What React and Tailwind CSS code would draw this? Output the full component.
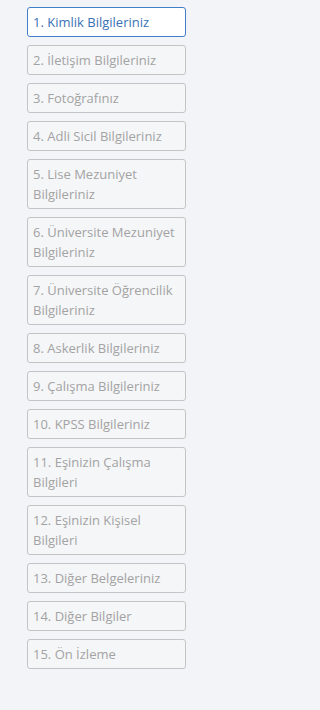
import React from 'react';

const steps = [
  '1. Kimlik Bilgileriniz',
  '2. İletişim Bilgileriniz',
  '3. Fotoğrafınız',
  '4. Adli Sicil Bilgileriniz',
  '5. Lise Mezuniyet Bilgileriniz',
  '6. Üniversite Mezuniyet Bilgileriniz',
  '7. Üniversite Öğrencilik Bilgileriniz',
  '8. Askerlik Bilgileriniz',
  '9. Çalışma Bilgileriniz',
  '10. KPSS Bilgileriniz',
  '11. Eşinizin Çalışma Bilgileri',
  '12. Eşinizin Kişisel Bilgileri',
  '13. Diğer Belgeleriniz',
  '14. Diğer Bilgiler',
  '15. Ön İzleme',
];

const App = () => {
  return (
    <div className="min-h-[710px] bg-[#f3f4f7] pt-[7px] font-['Open_Sans',sans-serif]">
      <div className="ml-[27px] flex w-[159px] flex-col gap-[8px]">
        {steps.map((step, i) => (
          <div
            key={step}
            className={
              i === 0
                ? 'rounded-[3px] border border-[#3f7fc7] bg-white px-[5px] py-[4px] text-[13px] leading-[20px] text-[#3a72b5]'
                : 'rounded-[3px] border border-[#c4c4c4] bg-[#f5f6f8] px-[5px] py-[4px] text-[13px] leading-[20px] text-[#a3a3a3]'
            }
          >
            {step}
          </div>
        ))}
      </div>
    </div>
  );
};

export default App;
